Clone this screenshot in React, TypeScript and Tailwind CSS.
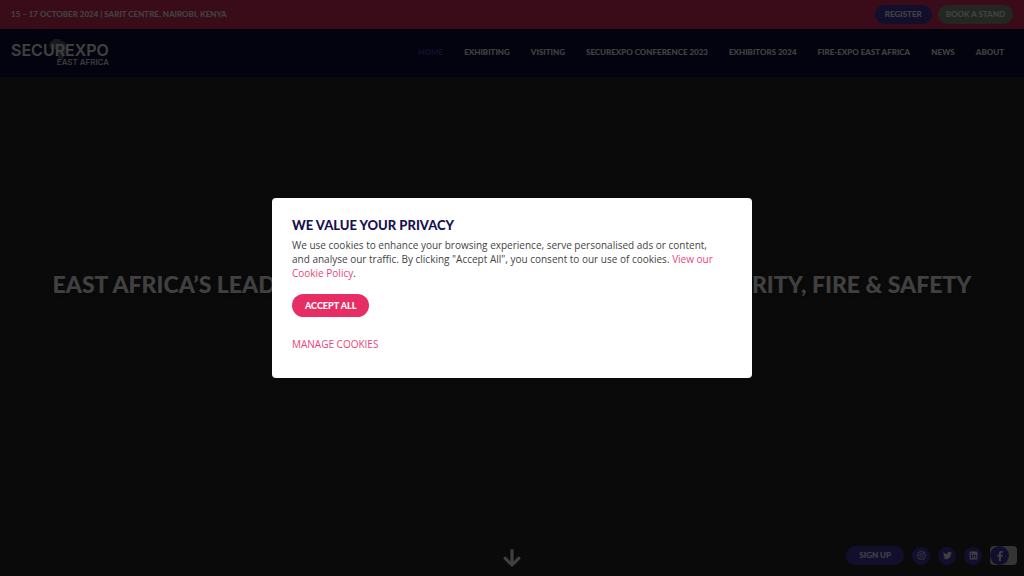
import React from "react";
import {
  FaArrowDown,
  FaFacebookF,
  FaInstagram,
  FaLinkedin,
  FaTwitter,
} from "react-icons/fa";

const navItems = [
  "Home",
  "Exhibiting",
  "Visiting",
  "SecurExpo Conference 2023",
  "Exhibitors 2024",
  "Fire-Expo East Africa",
  "News",
  "About",
];

const socials = [
  { label: "Instagram", icon: <FaInstagram /> },
  { label: "Twitter", icon: <FaTwitter /> },
  { label: "LinkedIn", icon: <FaLinkedin /> },
];

const Logo = () => {
  return (
    <a
      href="#"
      className="relative flex flex-col items-end pt-0.5 font-['Inter',sans-serif] text-white"
    >
      <svg
        viewBox="0 0 24 26"
        className="absolute -top-0.5 left-9 h-6 w-6"
        aria-hidden="true"
      >
        <path
          d="M3 4 L7 1 L12 1 L14 3 L18 4 L20 9 L23 11 L21 15 L18 18 L17 22 L14 25 L12 24 L10 18 L10 14 L7 12 L3 12 L1 8 Z"
          fill="#66666c"
        />
      </svg>
      <span className="relative text-base leading-4 font-semibold">
        SECUREXPO
      </span>
      <span className="relative text-[8px] leading-2 font-medium">
        EAST AFRICA
      </span>
    </a>
  );
};

const Header = () => {
  return (
    <header className="fixed inset-x-0 top-0 text-[8px] font-black uppercase text-white">
      <div className="flex items-center justify-between bg-[#e62e64] px-[11px] py-[5px] leading-[19px]">
        <p>15 – 17 October 2024 | Sarit Centre, Nairobi, Kenya</p>
        <div className="flex gap-1.5">
          <a href="#" className="rounded-full bg-[#483cb4] px-2.5">
            Register
          </a>
          <a href="#" className="rounded-full bg-[#889c90] px-2">
            Book a Stand
          </a>
        </div>
      </div>
      <div className="flex h-12 items-center justify-between bg-[#0c083c] pl-[11px] pr-5">
        <Logo />
        <nav className="flex gap-[21px] pb-0.5">
          {navItems.map((item) => (
            <a
              key={item}
              href="#"
              className={item === "Home" ? "text-[#483cb4]" : ""}
            >
              {item}
            </a>
          ))}
        </nav>
      </div>
    </header>
  );
};

const FloatingLinks = () => {
  return (
    <div className="fixed bottom-[11px] right-[7px] flex items-center gap-2 text-white">
      <a
        href="#"
        className="rounded-full bg-[#483cb4] px-[13px] text-[8px] leading-[19px] font-black uppercase"
      >
        Sign up
      </a>
      {socials.map((social) => (
        <a
          key={social.label}
          href="#"
          aria-label={social.label}
          className="flex size-[18px] items-center justify-center rounded-full bg-[#483cb4] text-[9px]"
        >
          {social.icon}
        </a>
      ))}
      <div className="flex w-[27px] rounded bg-[#d0d0d0]">
        <a
          href="#"
          aria-label="Facebook"
          className="flex size-[19px] items-center justify-center rounded-full bg-[#483cb4] text-[10px]"
        >
          <FaFacebookF />
        </a>
      </div>
    </div>
  );
};

const CookieDialog = () => {
  return (
    <div className="fixed inset-0 flex items-center justify-center bg-black/75">
      <div
        role="dialog"
        aria-labelledby="cookie-title"
        className="w-full max-w-[480px] rounded bg-white px-5 pt-[17px] pb-[27px]"
      >
        <h2
          id="cookie-title"
          className="text-[13px] leading-5 font-black uppercase text-[#17124f]"
        >
          We value your privacy
        </h2>
        <p className="mt-[3px] pr-3 font-['Open_Sans',sans-serif] text-[10px] leading-[14px] text-[#444444]">
          We use cookies to enhance your browsing experience, serve personalised
          ads or content, and analyse our traffic. By clicking "Accept All", you
          consent to our use of cookies.{" "}
          <a href="#" className="text-[#ea4577]">
            View our Cookie Policy
          </a>
          .
        </p>
        <button className="mt-3.5 block h-[23px] rounded-full bg-[#e62e64] px-[13px] text-[9px] font-black uppercase text-white">
          Accept All
        </button>
        <button className="mt-5 block font-['Open_Sans',sans-serif] text-[10px] leading-[14px] uppercase text-[#ea4577]">
          Manage Cookies
        </button>
      </div>
    </div>
  );
};

const App = () => {
  return (
    <div className="font-['Lato',sans-serif]">
      <main className="flex min-h-screen flex-col items-center bg-[#282828] px-5 pb-2 text-white">
        <div className="flex flex-1 items-center pt-5">
          <h1 className="text-center text-[23px] font-black uppercase text-shadow-md">
            East Africa’s leading trade event for commercial security, fire
            &amp; safety
          </h1>
        </div>
        <a href="#" aria-label="Scroll down" className="text-xl">
          <FaArrowDown />
        </a>
      </main>
      <Header />
      <FloatingLinks />
      <CookieDialog />
    </div>
  );
};

export default App;
